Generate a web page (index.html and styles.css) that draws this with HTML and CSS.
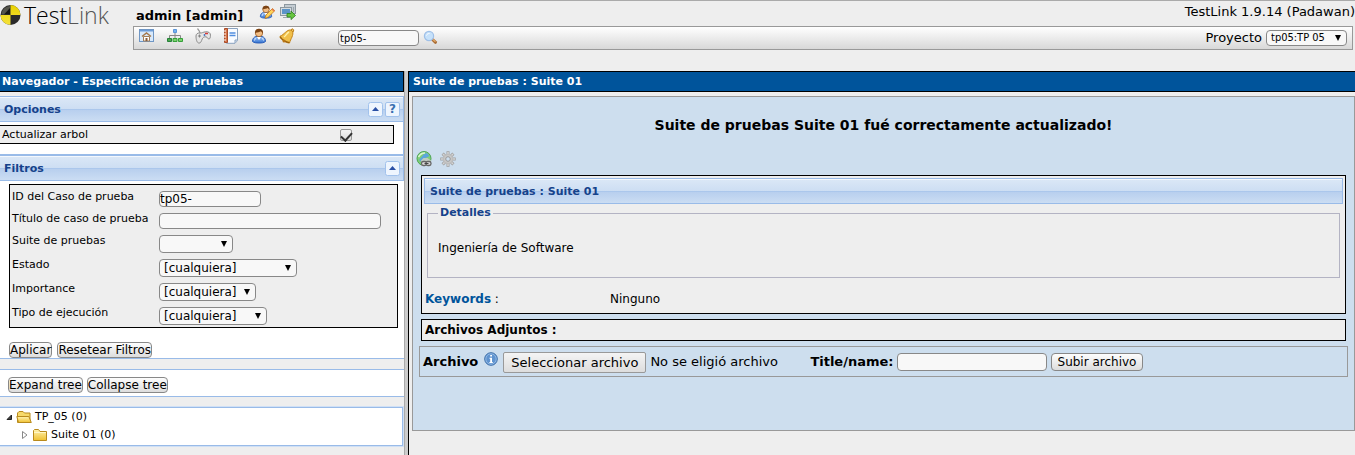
FILE: index.html
```
<!DOCTYPE html>
<html lang="es">
<head>
<meta charset="utf-8">
<title>TestLink 1.9.14 (Padawan)</title>
<link rel="stylesheet" href="styles.css">
</head>
<body>
<svg class="defs" aria-hidden="true">
  <defs>
    <linearGradient id="gold" x1="0" y1="0" x2="0" y2="1"><stop offset="0" stop-color="#fff3b0"/><stop offset="1" stop-color="#efc030"/></linearGradient>
    <linearGradient id="blue" x1="0" y1="0" x2="0" y2="1"><stop offset="0" stop-color="#a9ccf7"/><stop offset="1" stop-color="#2f6fd0"/></linearGradient>
    <linearGradient id="logoYellow" x1="0" y1="0" x2="0" y2="1"><stop offset="0" stop-color="#e8d000"/><stop offset="1" stop-color="#f5e23c"/></linearGradient>
    <symbol id="person" viewBox="0 0 16 16">
      <path d="M1.500 13.500c0-3 1.500-4.500 3.500-5h6c2 .5 3.500 2 3.500 5-1.500 1.300-3.500 1.500-6.500 1.500s-5-.2-6.500-1.500z" fill="url(#blue)" stroke="#2c5fb8"/>
      <path d="M3.500 12.500l1-2.500M12.500 12.500l-1-2.500" stroke="#d8e8ff"/>
      <path d="M6 9l2 3 2-3z" fill="#fff"/>
      <circle cx="8" cy="5" r="3.700" fill="#f2bd83" stroke="#9a5a20" stroke-width=".8"/>
      <path d="M4 5C4 2 5.500.8 8 .8S12 2 12 5c-1-.3-1.500-1-2-1.700-1.500.8-3.500 1-6 1.700z" fill="#7b4314"/>
    </symbol>
    <symbol id="up" viewBox="0 0 15 15">
      <rect x=".5" y=".5" width="14" height="14" rx="2" fill="#eef5fe" stroke="#a2c2ec"/>
      <path d="M4 9l3.500-4L11 9z" fill="#2a4fa5"/>
    </symbol>
  </defs>
</svg>

<header class="top">
  <div class="logo">
    <svg width="21" height="22" viewBox="0 0 21 22" aria-hidden="true">
      <circle cx="10.500" cy="11" r="10" fill="#2a2a2a"/>
      <path d="M10.500 11V1a10 10 0 0 1 10 10zM10.500 11v10A10 10 0 0 1 .5 11z" fill="url(#logoYellow)"/>
      <path d="M1.500 10.500A9 9 0 0 1 10 2v8.500z" fill="#55554c"/>
      <path d="M4 10.500L10 4v6.500z" fill="#161616"/>
    </svg>
    <span class="logo-test">Test</span><span class="logo-link">Link</span>
  </div>
  <div class="top-main">
    <div class="top-info">
      <div class="user">
        <b>admin [admin]</b>
        <a href="#" aria-label="Mi configuración"><svg width="16" height="16" viewBox="0 0 16 16"><use href="#person" width="14" height="16"/><path d="M6 14.500l1-3.500 6.500-6.500 2.300 2.200L9.300 13z" fill="#ffd35a" stroke="#c47a17" stroke-width=".8"/><path d="M12.500 5.500l1-1 2.300 2.200-1 1z" fill="#e87850"/></svg></a>
        <a href="#" aria-label="Salir"><svg width="16" height="16" viewBox="0 0 16 16"><rect x="4.500" y=".5" width="11" height="9" fill="#c4ccd2" stroke="#8d989f"/><rect x=".5" y="3.500" width="11" height="8" fill="#d6dce0" stroke="#8d989f"/><path d="M2 5h8v5H2z" fill="#5b94c8"/><path d="M3 13.500h7M13.500 3v5" stroke="#9ca6ad"/><path d="M7 9.500h4V7l4.500 4.500L11 15.600V13H7z" fill="#68c540" stroke="#287e1b" stroke-width=".8"/></svg></a>
      </div>
      <span>TestLink 1.9.14 (Padawan)</span>
    </div>
    <div class="toolbar">
      <nav class="tools">
        <a href="#" aria-label="Inicio"><svg width="16" height="16" viewBox="0 0 16 16"><rect x=".5" y="1.500" width="14" height="12" fill="#d8e9fb" stroke="#6f96c4"/><path d="M1 2h13v1.500H1z" fill="#6c9cd8"/><path d="M4.500 8.500h6v4.500h-6z" fill="#fff" stroke="#a57e55"/><path d="M3 8.500L7.500 5 12 8.500" fill="none" stroke="#a5794e" stroke-width="1.500"/><path d="M6.500 10h2v3h-2z" fill="#8b5d3b"/></svg></a>
        <a href="#" aria-label="Especificación"><svg width="16" height="16" viewBox="0 0 16 16"><path d="M8 5v3M2.500 10V7.500h11V10M8 7.500V10" fill="none" stroke="#888"/><path d="M6.500 1.500h3v3h-3z" fill="#72b2f2" stroke="#5b95d8"/><path d="M.5 10.500h4v3h-4z" fill="#4ca84c" stroke="#25803a"/><path d="M6 10.500h4v3H6zM11.500 10.500h4v3h-4z" fill="#7ad06d" stroke="#35a03a"/></svg></a>
        <a href="#" aria-label="Ejecutar"><svg width="16" height="16" viewBox="0 0 16 16"><path d="M5 5.500Q5 3.500 2.500.5" fill="none" stroke="#999" stroke-width="1.200"/><path d="M1 8c0-2 1.500-3.200 4-3 2 .2 3-.9 5.500-1.200 3-.4 5 1.200 5 3.400 0 2-.6 3.800-1.500 3.900-1.200.1-1.600-2.200-3-2.300-2-.1-3 .6-3.700 2-1 2.400-1.500 4.300-3.200 4.300C1.800 15.100 1 11 1 8z" fill="#e5e5e5" stroke="#8b8b8b"/><path d="M3 8h3M4.500 6.500v3" stroke="#858585"/><path d="M10 5.500h3" stroke="#d43b3b" stroke-width="1.500"/><circle cx="9.500" cy="7" r=".9" fill="#3b70c4"/></svg></a>
        <a href="#" aria-label="Informes"><svg width="16" height="16" viewBox="0 0 16 16"><path d="M3.500.5h11v12l-2.500 2.800H3.500z" fill="#f8fbff" stroke="#8aa2bf"/><path d="M1.500.5h3v14h-3z" fill="#d9764b" stroke="#a84d2b"/><path d="M1 3h2M1 6h2M1 9h2M1 12h2" stroke="#fff"/><path d="M6.500 5h6M6.500 7.500h6" stroke="#508ee0" stroke-width="1.500"/><path d="M12 15v-3h2.500" fill="#dce5ef" stroke="#8aa2bf"/></svg></a>
        <a href="#" aria-label="Usuarios"><svg width="16" height="16"><use href="#person"/></svg></a>
        <a href="#" aria-label="Eventos"><svg width="16" height="16" viewBox="0 0 16 16"><path d="M13 .7l1.800 1.200-.6 2-2-1.500z" fill="#f8d671" stroke="#bb7a12"/><path d="M11.800 2C7.500 1.500 5.500 6.500 1 8.300c-.7 2 5.500 6.800 9.500 6.700 1-4 4.500-8 3-11.500z" fill="#f0bf4a" stroke="#c48316"/><path d="M1.300 8.800c1 2.500 5.500 5.400 9 5.800" fill="none" stroke="#9a6110" stroke-width="1.300"/><path d="M10 4C8 5 7 7.500 5 9" fill="none" stroke="#fff0a8" stroke-width="1.500"/><circle cx="5" cy="13" r="1.500" fill="#b97514"/></svg></a>
      </nav>
      <form class="search">
        <input type="text" value="tp05-" aria-label="Buscar caso de prueba">
        <button type="button" aria-label="Buscar"><svg width="16" height="16" viewBox="0 0 16 16"><path d="M9.500 9.500l3 2.800" stroke="#a96c35" stroke-width="3" stroke-linecap="round"/><path d="M10 9.500l2.500 2.300" stroke="#e6aa65" stroke-width="1.200"/><circle cx="6" cy="6" r="4.600" fill="#c6e1fa" stroke="#9fc0e8" stroke-width="1.200"/><path d="M3.500 5.500c.5-1.500 1.500-2 3-2" stroke="#fff" fill="none"/></svg></button>
      </form>
      <div class="project">
        <label for="project">Proyecto</label>
        <span class="select small"><select id="project"><option>tp05:TP 05</option></select></span>
      </div>
    </div>
  </div>
</header>

<div class="frames">
  <aside class="left">
    <h1 class="title">Navegador - Especificación de pruebas</h1>
    <section class="panel">
      <div class="bar">
        <h2>Opciones</h2>
        <button type="button" aria-label="Contraer opciones"><svg width="15" height="15"><use href="#up"/></svg></button>
        <button type="button" class="help" aria-label="Ayuda">?</button>
      </div>
      <div class="panel-body options">
        <div class="option">
          <label for="refresh">Actualizar arbol</label>
          <input type="checkbox" id="refresh" checked>
        </div>
      </div>
    </section>
    <section class="panel joined">
      <div class="bar">
        <h2>Filtros</h2>
        <button type="button" aria-label="Contraer filtros"><svg width="15" height="15"><use href="#up"/></svg></button>
      </div>
      <form class="panel-body filters">
        <div class="fields">
          <label for="tcid">ID del Caso de prueba</label>
          <input type="text" id="tcid" class="w-id" value="tp05-">
          <label for="tctitle">Título de caso de prueba</label>
          <input type="text" id="tctitle" class="w-title">
          <label for="suite">Suite de pruebas</label>
          <span class="select w-suite"><select id="suite"><option></option></select></span>
          <label for="status">Estado</label>
          <span class="select w-status"><select id="status"><option>[cualquiera]</option></select></span>
          <label for="importance">Importance</label>
          <span class="select w-importance"><select id="importance"><option>[cualquiera]</option></select></span>
          <label for="exec">Tipo de ejecución</label>
          <span class="select w-exec"><select id="exec"><option>[cualquiera]</option></select></span>
        </div>
        <div class="buttons"><button type="button" class="btn">Aplicar</button><button type="button" class="btn">Resetear Filtros</button></div>
      </form>
    </section>
    <div class="tree-actions"><button type="button" class="btn">Expand tree</button><button type="button" class="btn">Collapse tree</button></div>
    <ul class="tree">
      <li>
        <svg width="8" height="8" viewBox="0 0 8 8"><path d="M6.500 2v4.500H2z" fill="#444" stroke="#222"/></svg>
        <svg width="16" height="14" viewBox="0 0 16 14"><path d="M1.500 12.500V3L3 1.500h4L8.500 3H14v9.500z" fill="#f6d96a" stroke="#b88a1c"/><path d="M.8 6.500h12l2.500 6H2.500z" fill="url(#gold)" stroke="#b88a1c"/></svg>
        <a href="#">TP_05 (0)</a>
      </li>
      <li class="child">
        <svg width="8" height="8" viewBox="0 0 8 8"><path d="M1.500.5v7L6 4z" fill="#fff" stroke="#888"/></svg>
        <svg width="16" height="14" viewBox="0 0 16 14"><path d="M1.500 12.500V2.500l1-1h4l1.500 2h6.500v9z" fill="url(#gold)" stroke="#b88a1c"/><path d="M2 4.500h12" stroke="#fff6c6"/></svg>
        <a href="#">Suite 01 (0)</a>
      </li>
    </ul>
  </aside>

  <main class="right">
    <h1 class="title">Suite de pruebas : Suite 01</h1>
    <div class="work">
      <p class="message">Suite de pruebas Suite 01 fué correctamente actualizado!</p>
      <div class="actions">
        <a href="#" aria-label="Enlace directo"><svg width="16" height="16" viewBox="0 0 16 16"><circle cx="8" cy="7.500" r="7" fill="#80cf76" stroke="#4fa556"/><path d="M3 9l5-6 3-1 2.500 3-4 2-3 5z" fill="#5ba6dc"/><path d="M2.500 6Q5 1.800 9 2" stroke="#dcf7d4" fill="none" stroke-width="1.500"/><path d="M5 11V9.500L7.500 7h4L15 9.500V15H5z" fill="#c0ccc0"/><rect x="5.500" y="10.500" width="5" height="4" rx="1.800" fill="#ddd" stroke="#666" stroke-width="1.300"/><rect x="10" y="10.500" width="5" height="4" rx="1.800" fill="#ddd" stroke="#666" stroke-width="1.300"/><path d="M8.500 12.500h4" stroke="#444"/></svg></a>
        <a href="#" aria-label="Acciones"><svg width="16" height="16" viewBox="0 0 16 16"><g stroke="#a0a0a0" stroke-width="3"><path d="M8 .3v15.400M.3 8h15.400M2.600 2.600l10.800 10.800M13.400 2.600L2.600 13.400"/></g><g stroke="#d4d4d4" stroke-width="1.600"><path d="M8 1v14M1 8h14M3 3l10 10M13 3L3 13"/></g><circle cx="8" cy="8" r="4.500" fill="#ccc" stroke="#bdbdbd" stroke-width="1.500"/><circle cx="8" cy="8" r="2.300" fill="#cddeee" stroke="#999"/></svg></a>
      </div>
      <section class="suite">
        <div class="bar"><h2>Suite de pruebas : Suite 01</h2></div>
        <fieldset>
          <legend>Detalles</legend>
          <p>Ingeniería de Software</p>
        </fieldset>
        <dl class="keywords"><dt><a href="#">Keywords</a> :</dt><dd>Ninguno</dd></dl>
      </section>
      <h2 class="attach-title">Archivos Adjuntos :</h2>
      <form class="upload">
        <b>Archivo</b>
        <svg class="info" width="14" height="14" viewBox="0 0 14 14" aria-hidden="true"><circle cx="7" cy="7" r="6.300" fill="#5f93cf" stroke="#3d6ea8"/><circle cx="7" cy="7" r="5.200" fill="none" stroke="#9cc0e8" stroke-width=".8"/><path d="M6.200 3h1.800v1.500H6.200zM5.500 5.800H8V10h.8v1H5.400v-1h.8V6.800h-.7z" fill="#fff"/></svg>
        <label class="file">Seleccionar archivo<input type="file"></label>
        <span class="file-name">No se eligió archivo</span>
        <label for="title" class="title-label">Title/name:</label>
        <input type="text" id="title">
        <button type="button" class="btn wide">Subir archivo</button>
      </form>
    </div>
  </main>
</div>
</body>
</html>
```
FILE: styles.css
```
* { box-sizing: border-box; }

body {
  margin: 0;
  min-height: 100vh;
  display: flex;
  flex-direction: column;
  background: #eee;
  color: #000;
  font: 12px/16px "DejaVu Sans", Verdana, sans-serif;
}

h1, h2, p, ul, dl, dd { margin: 0; padding: 0; }
a { color: inherit; text-decoration: none; }
svg { display: block; flex: none; }
.defs { position: absolute; width: 0; height: 0; }

input, select, button { font: inherit; color: inherit; margin: 0; }

input[type="text"] {
  height: 16px;
  padding: 0;
  border: 1px solid #888;
  border-radius: 4px;
  background: #f8f8f8;
}

.btn {
  height: 16px;
  padding: 0;
  border: 1px solid #888;
  border-radius: 4px;
  background: linear-gradient(#fdfdfd, #ddd);
  line-height: 14px;
}

.btn.wide { height: 18px; padding: 0 6px; line-height: 16px; }

.select { position: relative; display: inline-block; }
.select select {
  display: block;
  width: 100%;
  height: 18px;
  padding: 0 16px 0 4px;
  border: 1px solid #888;
  border-radius: 4px;
  background: #f8f8f8;
  appearance: none;
}
.select::after {
  content: "";
  position: absolute;
  right: 6px;
  top: 6px;
  border: 3px solid transparent;
  border-top: 6px solid #000;
  border-bottom: 0;
  pointer-events: none;
}

/* Header */
.top {
  display: flex;
  height: 71px;
  border-top: 1px solid #aaa;
  font-size: 13px;
}

.logo {
  display: flex;
  align-items: center;
  width: 133px;
  height: 28px;
  font: 300 23px/28px "Open Sans", sans-serif;
}
.logo-test { margin-left: 3px; color: #000; }
.logo-link { color: #555; }

.top-main { flex: 1; padding-right: 2px; }
.top-info {
  display: flex;
  justify-content: space-between;
  height: 25px;
  margin-right: -2px;
  padding-top: 3px;
}
.user { display: flex; gap: 5px; padding-left: 3px; }
.user b { padding: 4px 11px 0 0; }

.toolbar {
  display: flex;
  align-items: center;
  height: 24px;
  border: 1px solid #999;
  background: linear-gradient(#fff, #d8d8d8);
}
.tools { display: flex; gap: 12px; width: 204px; height: 20px; padding-left: 5px; }
.tools a { width: 16px; }
.search { display: flex; gap: 4px; flex: 1; font: 11px/14px "DejaVu Sans Condensed", "DejaVu Sans", sans-serif; }
.search input { width: 81px; padding-left: 1px; }
.search button { padding: 0; border: 0; background: none; }
.project { display: flex; align-items: center; gap: 4px; padding-right: 5px; }
.select.small { width: 81px; font: 11px/14px "DejaVu Sans Condensed", "DejaVu Sans", sans-serif; }
.select.small select { height: 16px; }
.select.small::after { top: 5px; }

/* Frames */
.frames { display: flex; flex: 1; }
.left { width: 409px; border-right: 1px solid #000; box-shadow: inset -3px 0 #ccc, inset -4px 0 #aaa; padding-right: 4px; }
.right { flex: 1; min-width: 0; }

.title {
  height: 21px;
  margin-bottom: 4px;
  padding-left: 2px;
  border: 1px solid #000;
  border-left: 0;
  background: #00549b;
  color: #fff;
  font-size: 11px;
  line-height: 19px;
}
.right .title { padding-left: 4px; border-right: 0; }

.bar {
  display: flex;
  align-items: center;
  gap: 2px;
  height: 26px;
  padding: 1px 3px 0 4px;
  border: 1px solid #99bbe8;
  background: linear-gradient(#f4f8fd 0 1px, #dae7f6 1px, #cddef3 12px, #abc7ec 12px 13px, #b8cfee 13px, #cbddf3);
  color: #15428b;
}
.bar h2 { flex: 1; font-size: 11px; line-height: 15px; }
.bar button { width: 15px; height: 15px; padding: 0; border: 0; background: none; }
.bar .help {
  border: 1px solid #a2c2ec;
  border-radius: 2px;
  background: #eef5fe;
  color: #3a70b0;
  font-weight: bold;
  line-height: 13px;
}

.left .bar { border-left: 0; }
.panel-body { background: #fff; font-size: 11px; border-right: 1px solid #99bbe8; }
.options { height: 32px; padding: 3px 9px 0 0; }
.option {
  display: flex;
  align-items: center;
  height: 19px;
  padding-left: 2px;
  border: 1px solid #000;
  border-left: 0;
  background: #eee;
}
.option label { width: 338px; }
.option input {
  appearance: none;
  display: grid;
  place-items: start center;
  width: 12px;
  height: 12px;
  border: 1px solid #999;
  border-radius: 2px;
  background: linear-gradient(#f4f4f4, #ddd);
}
.option input:checked::after {
  content: "";
  width: 5px;
  height: 9px;
  border: solid #333;
  border-width: 0 2px 2px 0;
  transform: rotate(42deg);
}
.joined .bar { height: 27px; border-top-width: 2px; }

.filters { padding: 3px 5px 0 9px; border-bottom: 1px solid #99bbe8; border-right: 0; }
.fields {
  display: grid;
  grid-template-columns: 147px 1fr;
  gap: 6px 0;
  padding: 6px 2px 2px;
  border: 1px solid #000;
  background: #eee;
  margin-right: 1px;
}
.fields label { height: 12px; line-height: 12px; }
.fields input, .fields .select { font-size: 12px; }
.w-id { width: 102px; }
.w-title { width: 222px; }
.w-suite { width: 74px; }
.w-status { width: 138px; }
.w-importance { width: 97px; }
.w-exec { width: 108px; }

.buttons { display: flex; gap: 5px; padding-top: 14px; font-size: 12px; }

.tree-actions {
  display: flex;
  gap: 4px;
  height: 28px;
  margin: 10px 0;
  padding: 7px 8px 0;
  border: solid #99bbe8;
  border-width: 1px 0;
  background: #fff;
}

.tree {
  margin: 0 1px 0 0;
  padding: 0 0 1px;
  border: 1px solid #99bbe8;
  border-left: 0;
  box-shadow: 0 0 0 1px #d0e0f5;
  background: #fff;
  font-size: 11px;
  list-style: none;
}
.tree li { display: flex; align-items: center; gap: 3px; height: 18px; padding-left: 5px; }
.tree .child { padding-left: 21px; }

/* Work area */
.work {
  height: 335px;
  margin-left: 3px;
  padding: 17px 6px 0;
  border: 1px solid #999;
  background: #cddeee;
}
.message { font-size: 14px; font-weight: bold; line-height: 22px; text-align: center; }
.actions { display: flex; gap: 8px; padding: 15px 0 8px; margin-left: -3px; }

.suite {
  height: 139px;
  margin: 0 2px 5px;
  padding: 2px;
  border: 1px solid #000;
  background: #eee;
}
.suite .bar { padding-left: 5px; }
.suite fieldset {
  height: 72px;
  min-width: 0;
  margin: 2px 3px 13px;
  padding: 0 10px;
  border: 1px solid #b3b3c3;
}
.suite legend { padding: 0 2px; color: #15428b; font-size: 11px; font-weight: bold; line-height: 14px; }
.suite fieldset p { padding-top: 20px; }
.keywords { display: flex; padding-left: 1px; }
.keywords dt { width: 185px; }
.keywords a { color: #00549b; font-weight: bold; }

.attach-title {
  height: 22px;
  margin: 0 2px 5px;
  padding-left: 3px;
  border: 1px solid #000;
  background: #eee;
  font-size: 12px;
  line-height: 20px;
}

.upload {
  display: flex;
  align-items: center;
  height: 31px;
  padding: 1px 0 0 3px;
  border: 1px solid #999;
  font-size: 13px;
}
.upload .info { margin: 0 5px 6px 6px; }
.file {
  height: 21px;
  padding: 0 7px;
  border: 1px solid #999;
  border-radius: 2px;
  background: linear-gradient(#f4f4f4, #ddd);
  line-height: 19px;
}
.file input { position: absolute; width: 1px; height: 1px; opacity: 0; }
.file-name { width: 164px; padding-left: 4px; }
.title-label { margin-right: 3px; font-weight: bold; }
.upload input[type="text"] { width: 150px; height: 18px; margin-right: 4px; }
.upload .btn { font-size: 12px; }
```
